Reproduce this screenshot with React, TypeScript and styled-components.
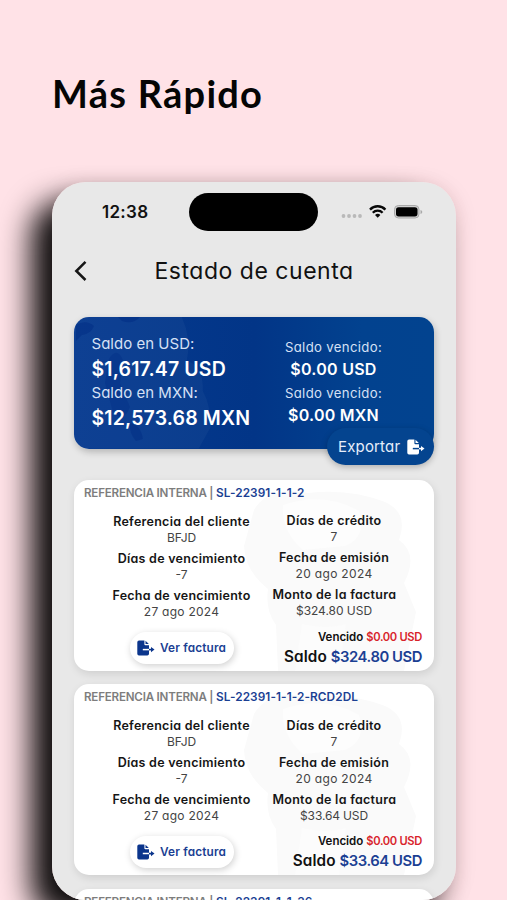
import React from 'react';
import styled, { createGlobalStyle } from 'styled-components';

const GlobalStyle = createGlobalStyle`
  * { box-sizing: border-box; }
  html, body { margin: 0; padding: 0; background: #ffe2e7; }
  body { overflow: hidden; }
`;

const Page = styled.main`
  width: 507px;
  height: 900px;
  overflow: hidden;
  background: #ffe2e7;
  padding: 67px 0 0 52px;
  font-family: Inter, "Open Sans", sans-serif;
  font-feature-settings: "cv11";
  color: #111;
`;

const Headline = styled.h1`
  margin: 0 0 63px;
  height: 52px;
  font: 700 38px/52px Lato, sans-serif;
  letter-spacing: 1.25px;
  color: #050505;
  white-space: nowrap;
`;

const Phone = styled.section`
  width: 404px;
  height: 718px;
  border-radius: 34px;
  overflow: hidden;
  background: #e8e8e8;
`;

const PhoneShadow = styled.div`
  width: 404px;
  border-radius: 34px;
  box-shadow: -21px 19px 30px 0 rgba(0, 0, 0, 0.94), 0 4px 22px rgba(60, 0, 10, 0.13);
`;

const StatusBar = styled.div`
  display: flex;
  align-items: center;
  height: 60px;
  padding-left: 50px;
`;

const Clock = styled.span`
  width: 87.4px;
  font-size: 17px;
  font-weight: 600;
  letter-spacing: 0.28px;
  color: #111;
`;

const Island = styled.div`
  width: 129px;
  height: 38px;
  border-radius: 19px;
  background: #000;
`;

const StatusIcons = styled.svg`
  margin-left: 21px;
`;

const NavBar = styled.header`
  display: flex;
  align-items: center;
  height: 58px;
  margin-bottom: 2px;
  padding-left: 22px;
`;

const ScreenTitle = styled.h2`
  margin: 0 0 0 66.5px;
  font-size: 23px;
  font-weight: 400;
  letter-spacing: 0.52px;
  white-space: nowrap;
`;

const Body = styled.div`
  padding: 15px 22px 0;
`;

const SummaryCard = styled.section`
  position: relative;
  display: flex;
  width: 359.5px;
  height: 131.5px;
  border-radius: 15px;
  background: linear-gradient(90deg, #063a90 0%, #023587 50%, #02428f 80%, #02438f 100%);
  box-shadow: 1px 3px 7px rgba(0, 0, 0, 0.22);
  color: #fff;
`;

const CardArt = styled.svg`
  position: absolute;
  inset: 0;
  border-radius: 15px;
`;

const Balances = styled.div`
  position: relative;
  width: 192px;
  padding: 17px 0 0 17.5px;
`;

const Overdue = styled.div`
  position: relative;
  width: 135px;
  padding-top: 20px;
  text-align: center;
`;

const BalanceLabel = styled.div<{ $small?: boolean }>`
  height: ${p => (p.$small ? 21 : 20)}px;
  line-height: ${p => (p.$small ? 21 : 20)}px;
  font-size: ${p => (p.$small ? 13.2 : 15)}px;
  letter-spacing: ${p => (p.$small ? 0.33 : 0.02)}px;
  color: #d5e0f5;
  white-space: nowrap;
`;

const BalanceAmount = styled.div<{ $small?: boolean }>`
  height: ${p => (p.$small ? 25 : 29)}px;
  line-height: ${p => (p.$small ? 22 : 30)}px;
  font-size: ${p => (p.$small ? 16 : 19.5)}px;
  letter-spacing: ${p => (p.$small ? 0.25 : 0.14)}px;
  font-weight: 600;
  white-space: nowrap;
`;

const ExportButton = styled.button`
  position: absolute;
  right: 0;
  bottom: -16.5px;
  display: flex;
  align-items: center;
  gap: 7px;
  width: 107px;
  height: 37px;
  padding: 0 0 0 11.5px;
  border: 0;
  border-radius: 18.5px;
  background: #04448f;
  box-shadow: 0 2px 6px rgba(0, 0, 0, 0.25);
  font: inherit;
  font-size: 15px;
  letter-spacing: 0.17px;
  color: #e6eefb;
`;

const InvoiceList = styled.div`
  display: flex;
  flex-direction: column;
  gap: 13.3px;
  margin-top: 31.5px;
`;

const InvoiceCard = styled.article`
  position: relative;
  width: 360px;
  height: 191px;
  flex: none;
  padding: 4px 12px 0 10px;
  border-radius: 15px;
  background: #fff;
  box-shadow: 1px 3px 8px rgba(0, 0, 0, 0.11);
`;

const Reference = styled.div`
  position: relative;
  height: 18px;
  font-size: 11.6px;
  line-height: 18px;
  font-weight: 600;
  letter-spacing: -0.21px;
  color: #7d7d7d;
  white-space: nowrap;
`;

const ReferenceCode = styled.b`
  font-size: 11.8px;
  font-weight: 600;
  letter-spacing: 0.09px;
  color: #1b3f93;
`;

const Details = styled.div`
  position: relative;
  display: flex;
  gap: 21.5px;
  padding: 11px 0 0 28px;
`;

const DetailColumn = styled.div<{ $width: number; $lift?: boolean }>`
  width: ${p => p.$width}px;
  margin-top: ${p => (p.$lift ? -0.8 : 0)}px;
  text-align: center;
  white-space: nowrap;
`;

const DetailLabel = styled.div`
  height: 18px;
  font-size: 12.5px;
  line-height: 18px;
  font-weight: 600;
  letter-spacing: 0.27px;
  color: #151515;
`;

const DetailValue = styled.div<{ $track?: number }>`
  height: 19px;
  font-size: 12px;
  line-height: 14px;
  letter-spacing: ${p => p.$track ?? 0}px;
  color: #444;
`;

const CardFooter = styled.div`
  position: relative;
  display: flex;
  justify-content: space-between;
  padding-left: 46px;
  margin-top: 4px;
`;

const InvoiceButton = styled.button`
  display: flex;
  align-items: center;
  gap: 5px;
  width: 104px;
  height: 32px;
  margin-top: 4px;
  padding: 0 0 0 7px;
  border: 0;
  border-radius: 16px;
  background: #fff;
  box-shadow: 1px 2px 7px rgba(0, 0, 0, 0.19);
  font: inherit;
  font-size: 11.8px;
  font-weight: 600;
  letter-spacing: 0.17px;
  color: #1b3f93;
  white-space: nowrap;
`;

const Totals = styled.div`
  text-align: right;
  font-weight: 600;
  white-space: nowrap;
`;

const OverdueLine = styled.div`
  height: 18px;
  font-size: 11.5px;
  line-height: 18px;
  letter-spacing: 0;
`;

const OverdueValue = styled.span`
  font-size: 11.2px;
  letter-spacing: -0.33px;
  color: #d8232b;
`;

const BalanceLine = styled.div`
  height: 21px;
  font-size: 15.3px;
  line-height: 21px;
  letter-spacing: 0.1px;
`;

const BalanceValue = styled.span`
  font-size: 14.8px;
  letter-spacing: -0.43px;
  color: #1b3f93;
`;

const ExportIcon = ({ color, cut }: { color: string; cut: string }) => (
  <svg width="18" height="16" viewBox="0 0 18 16">
    <path
      d="M2 .5H7.400V4.300Q7.400 5.200 8.300 5.200H12V13.800A1.700 1.700 0 0 1 10.300 15.500H2A1.700 1.700 0 0 1 .3 13.800V2.200A1.700 1.700 0 0 1 2 .5Z"
      fill={color}
    />
    <path d="M8.500.7 11.800 4.100H8.500Z" fill={color} />
    <path d="M5.800 9.600H12.200" stroke={cut} strokeWidth="1.500" />
    <path d="M12 9.600h3" stroke={color} strokeWidth="1.600" />
    <path d="m14 6.900 3.500 2.700-3.500 2.700Z" fill={color} />
  </svg>
);

const SummaryArt = () => (
  <CardArt width="359.5" height="131.5" viewBox="0 0 360 131.5" preserveAspectRatio="none">
    <path d="M0 0H108Q118 22 113 44Q130 48 129 74Q137 88 137 110L125 131.500H0Z" fill="#ffffff" opacity=".035" />
    <path d="M2 8Q12 2 20 9Q17 17 8 18L2 24Z" fill="#002c83" opacity=".5" />
    <path d="M44 0H66Q59 8 48 4Z" fill="#002c83" opacity=".5" />
    <path d="M35 42Q43 29 49 43L46 66L56 90Q50 107 39 95L31 66Z" fill="#002c83" opacity=".35" />
    <path d="M56 106Q67 108 69 122L62 124Q55 116 56 106Z" fill="#002c83" opacity=".45" />
  </CardArt>
);

const InvoiceArt = () => (
  <CardArt width="360" height="191" viewBox="0 0 360 191">
    <path
      d="M180 30Q195 5 234 13Q275 8 311 22Q335 33 325 60Q345 74 330 103L342 132L330 191H204L202 145Q191 130 194 109Q171 91 170 66Z"
      fill="#fafafa"
    />
    <path d="M209 25Q251 11 285 31Q293 57 271 66L229 70Q207 51 209 25Z" fill="#fdfdfd" />
    <path d="M228 144Q253 150 272 144L265 191H221Z" fill="#fcfcfc" />
  </CardArt>
);

interface Invoice {
  code: string;
  amount?: string;
  track?: number;
}

const invoices: Invoice[] = [
  { code: 'SL-22391-1-1-2', amount: '$324.80 USD', track: -0.04 },
  { code: 'SL-22391-1-1-2-RCD2DL', amount: '$33.64 USD', track: -0.14 },
  { code: 'SL-22391-1-1-36' },
];

const InvoiceItem = ({ code, amount, track }: Invoice) => (
  <InvoiceCard>
    <InvoiceArt />
    <Reference>
      REFERENCIA INTERNA | <ReferenceCode>{code}</ReferenceCode>
    </Reference>
    {amount && (
      <>
        <Details>
          <DetailColumn $width={139}>
            <DetailLabel>Referencia del cliente</DetailLabel>
            <DetailValue $track={-0.2}>BFJD</DetailValue>
            <DetailLabel>Días de vencimiento</DetailLabel>
            <DetailValue>-7</DetailValue>
            <DetailLabel>Fecha de vencimiento</DetailLabel>
            <DetailValue $track={0.26}>27 ago 2024</DetailValue>
          </DetailColumn>
          <DetailColumn $width={123} $lift>
            <DetailLabel>Días de crédito</DetailLabel>
            <DetailValue>7</DetailValue>
            <DetailLabel>Fecha de emisión</DetailLabel>
            <DetailValue $track={0.33}>20 ago 2024</DetailValue>
            <DetailLabel>Monto de la factura</DetailLabel>
            <DetailValue $track={track}>{amount}</DetailValue>
          </DetailColumn>
        </Details>
        <CardFooter>
          <InvoiceButton>
            <ExportIcon color="#0b358c" cut="#fff" />
            Ver factura
          </InvoiceButton>
          <Totals>
            <OverdueLine>
              Vencido <OverdueValue>$0.00 USD</OverdueValue>
            </OverdueLine>
            <BalanceLine>
              Saldo <BalanceValue>{amount}</BalanceValue>
            </BalanceLine>
          </Totals>
        </CardFooter>
      </>
    )}
  </InvoiceCard>
);

export default function App() {
  return (
    <Page>
      <GlobalStyle />
      <Headline>Más Rápido</Headline>
      <PhoneShadow>
        <Phone>
          <StatusBar>
            <Clock>12:38</Clock>
            <Island />
            <StatusIcons width="86" height="20" viewBox="0 0 86 20">
              <g fill="#b9b9b9">
                <circle cx="4.500" cy="14" r="1.900" />
                <circle cx="10" cy="14" r="1.900" />
                <circle cx="15.500" cy="14" r="1.900" />
                <circle cx="21" cy="14" r="1.900" />
              </g>
              <g fill="none" stroke="#080808" strokeWidth="2.300">
                <path d="M31 7.600a10.500 10.500 0 0 1 15.400 0" />
                <path d="M33.800 10.700a6.700 6.700 0 0 1 9.800 0" />
              </g>
              <path d="m36 12.900a4 4 0 0 1 5.400 0l-2.700 2.800Z" fill="#080808" />
              <rect x="55.500" y="3.500" width="24.500" height="12.500" rx="3.900" fill="#d0d0d0" stroke="#a9a9a9" />
              <rect x="57" y="5.200" width="21.500" height="9.200" rx="2.600" fill="#000" />
              <path d="M81.500 8v4q1.800-.7 1.800-2t-1.800-2Z" fill="#a9a9a9" />
            </StatusIcons>
          </StatusBar>
          <NavBar>
            <svg width="14" height="22" viewBox="0 0 14 22">
              <path d="M11.500 1.800 2.300 11l9.200 9" fill="none" stroke="#161616" strokeWidth="2.500" />
            </svg>
            <ScreenTitle>Estado de cuenta</ScreenTitle>
          </NavBar>
          <Body>
            <SummaryCard>
              <SummaryArt />
              <Balances>
                <BalanceLabel>Saldo en USD:</BalanceLabel>
                <BalanceAmount>$1,617.47 USD</BalanceAmount>
                <BalanceLabel>Saldo en MXN:</BalanceLabel>
                <BalanceAmount>$12,573.68 MXN</BalanceAmount>
              </Balances>
              <Overdue>
                <BalanceLabel $small>Saldo vencido:</BalanceLabel>
                <BalanceAmount $small>$0.00 USD</BalanceAmount>
                <BalanceLabel $small>Saldo vencido:</BalanceLabel>
                <BalanceAmount $small>$0.00 MXN</BalanceAmount>
              </Overdue>
              <ExportButton>
                Exportar
                <ExportIcon color="#fff" cut="#04448f" />
              </ExportButton>
            </SummaryCard>
            <InvoiceList>
              {invoices.map(invoice => (
                <InvoiceItem key={invoice.code} {...invoice} />
              ))}
            </InvoiceList>
          </Body>
        </Phone>
      </PhoneShadow>
    </Page>
  );
}
